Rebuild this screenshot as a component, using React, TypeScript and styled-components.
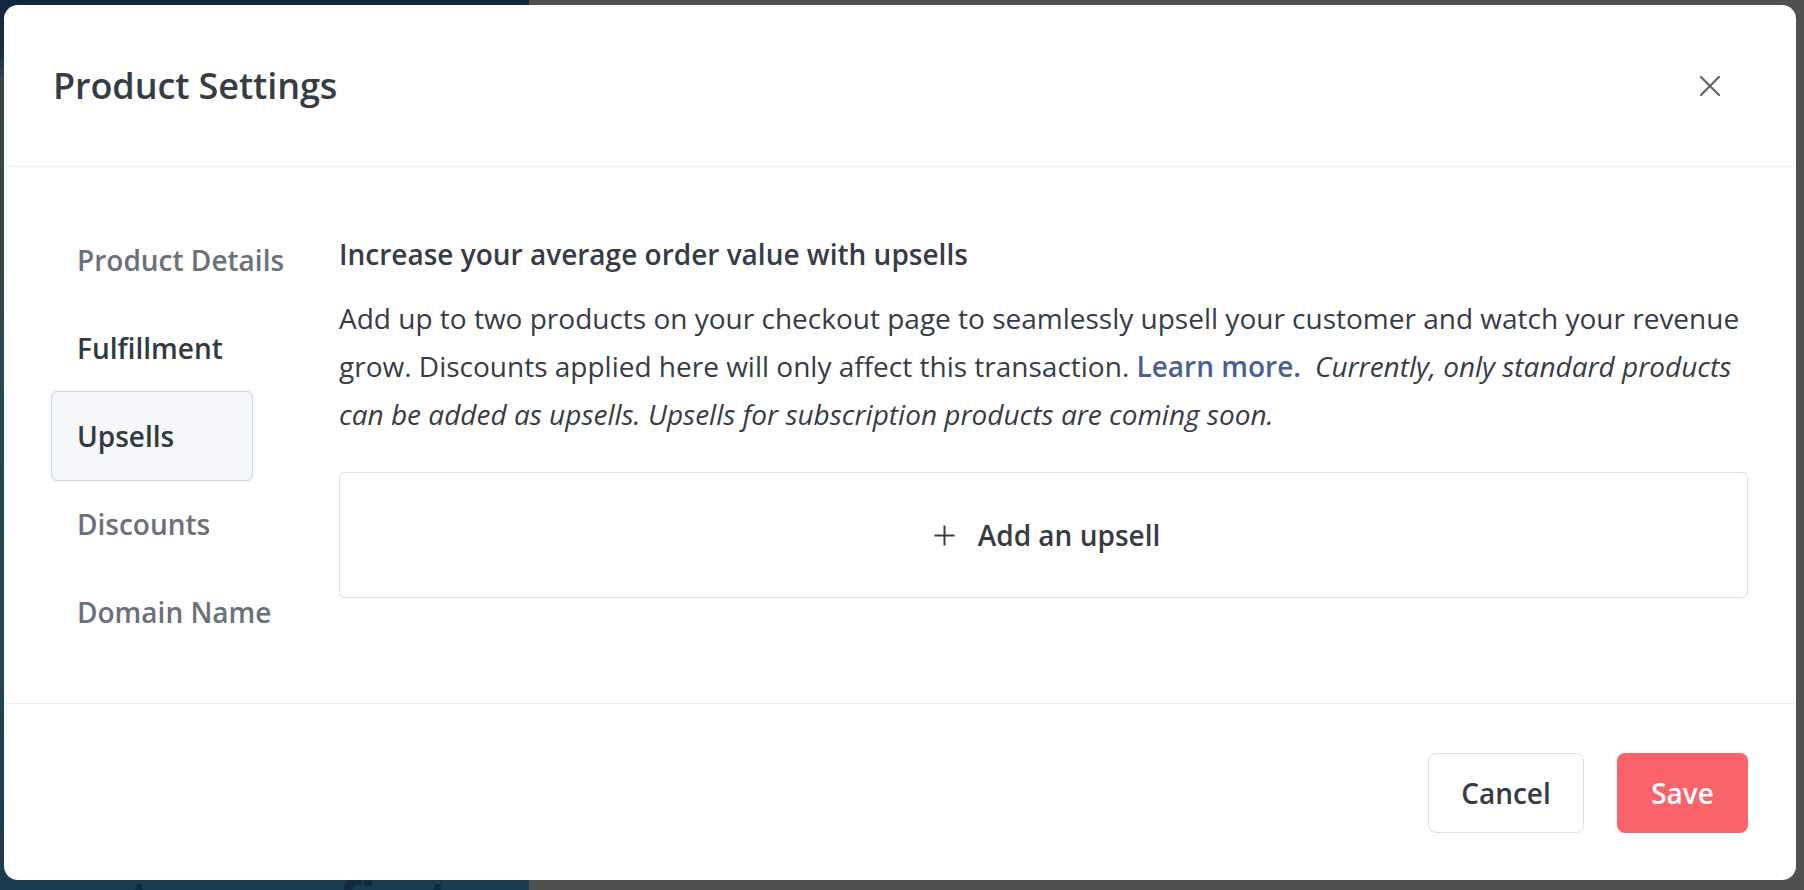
import React from "react";
import styled, { createGlobalStyle } from "styled-components";

const GlobalStyle = createGlobalStyle`
  html, body {
    margin: 0;
    padding: 0;
    height: 100%;
    overflow: hidden;
  }
  body {
    font-family: "Open Sans", "Noto Sans", sans-serif;
    -webkit-font-smoothing: antialiased;
  }
  * { box-sizing: border-box; }
`;

const Backdrop = styled.div`
  position: relative;
  display: flex;
  width: 100vw;
  height: 100vh;
`;

const BackdropLeft = styled.div`
  width: 529px;
  display: flex;
  flex-direction: column;
  justify-content: flex-end;
  overflow: hidden;
  background: linear-gradient(
    to bottom,
    #10263b 0%,
    #14304a 6%,
    #3c4446 9%,
    #3a4548 30%,
    #22494f 45%,
    #1f4552 75%,
    #1a3b4d 100%
  );
`;

const BackdropText = styled.div`
  font-family: "Open Sans", sans-serif;
  font-weight: 700;
  font-size: 54px;
  line-height: 54px;
  color: #0f2a40;
  white-space: nowrap;
  margin: 0 0 -36px -22px;
`;

const BackdropRight = styled.div`
  flex: 1;
  background: #4f504f;
`;

const Modal = styled.div`
  position: absolute;
  left: 4px;
  top: 5px;
  width: 1792px;
  height: 875px;
  background: #ffffff;
  border-radius: 14px;
  display: flex;
  flex-direction: column;
  overflow: hidden;
`;

const Header = styled.header`
  height: 162px;
  flex: none;
  display: flex;
  align-items: center;
  justify-content: space-between;
  padding: 0 66px 0 49px;
  border-bottom: 1px solid #e9eef3;
`;

const Title = styled.h1`
  margin: 0;
  font-size: 36px;
  font-weight: 600;
  color: #363c45;
  letter-spacing: -0.1px;
`;

const CloseButton = styled.button`
  width: 40px;
  height: 40px;
  border: none;
  background: transparent;
  padding: 0;
  display: flex;
  align-items: center;
  justify-content: center;
  cursor: pointer;
`;

const Body = styled.div`
  flex: 1;
  display: flex;
  gap: 86px;
  padding: 49px 48px 0 47px;
`;

const Nav = styled.nav`
  width: 202px;
  flex: none;
  display: flex;
  flex-direction: column;
`;

const NavItem = styled.div<{ $active?: boolean; $strong?: boolean }>`
  display: flex;
  align-items: center;
  padding-left: 25px;
  font-size: 28px;
  font-weight: 600;
  white-space: nowrap;
  color: ${(p) => (p.$active || p.$strong ? "#323940" : "#6b7079")};
  border-radius: 6px;
  border: 1px solid ${(p) => (p.$active ? "#cbd5e3" : "transparent")};
  background: ${(p) => (p.$active ? "#f5f7fa" : "transparent")};
  height: ${(p) => (p.$active ? "90px" : "88px")};
  margin: ${(p) => (p.$active ? "-1px 0" : "0")};
`;

const Content = styled.section`
  flex: 1;
  display: flex;
  flex-direction: column;
`;

const Heading = styled.h2`
  margin: 18px 0 20px;
  font-size: 28px;
  line-height: 40px;
  font-weight: 600;
  color: #363c45;
`;

const Paragraph = styled.p`
  margin: 0 0 34px;
  font-size: 28px;
  line-height: 48px;
  font-weight: 400;
  color: #363c45;
`;

const Link = styled.a`
  color: #4a5f94;
  font-weight: 600;
  text-decoration: none;
  margin-right: 14px;
`;

const Note = styled.em`
  font-style: italic;
`;

const AddBox = styled.button`
  height: 126px;
  width: 100%;
  border: 1.5px solid #dde1e6;
  border-radius: 6px;
  background: #ffffff;
  display: flex;
  align-items: center;
  justify-content: center;
  gap: 23px;
  padding: 0 0 0 7px;
  font-family: inherit;
  font-size: 28px;
  font-weight: 600;
  color: #363c45;
  cursor: pointer;
`;

const Footer = styled.footer`
  height: 177px;
  flex: none;
  border-top: 1px solid #e9eef3;
  display: flex;
  align-items: center;
  justify-content: flex-end;
  gap: 33px;
  padding: 2px 48px 0 0;
`;

const FooterButton = styled.button<{ $primary?: boolean }>`
  height: 80px;
  width: ${(p) => (p.$primary ? "131px" : "156px")};
  border-radius: 8px;
  border: ${(p) => (p.$primary ? "none" : "1.5px solid #dde1e6")};
  background: ${(p) => (p.$primary ? "#fb636b" : "#ffffff")};
  color: ${(p) => (p.$primary ? "#ffffff" : "#363c45")};
  font-family: inherit;
  font-size: 28px;
  font-weight: 600;
  cursor: pointer;
`;

const CloseIcon = () => (
  <svg width="20" height="20" viewBox="0 0 20 20" fill="none">
    <path d="M1 1 L19 19 M19 1 L1 19" stroke="#60656c" strokeWidth="2.2" strokeLinecap="round" />
  </svg>
);

const PlusIcon = () => (
  <svg width="21" height="21" viewBox="0 0 21 21" fill="none">
    <path d="M10.5 0.5 V20.5 M0.5 10.5 H20.5" stroke="#363c45" strokeWidth="2" />
  </svg>
);

const navItems = [
  { label: "Product Details" },
  { label: "Fulfillment", strong: true },
  { label: "Upsells", active: true },
  { label: "Discounts" },
  { label: "Domain Name" },
];

export default function App() {
  return (
    <>
      <GlobalStyle />
      <Backdrop>
        <BackdropLeft>
          <BackdropText>iness to your first</BackdropText>
        </BackdropLeft>
        <BackdropRight />
        <Modal>
          <Header>
            <Title>Product Settings</Title>
            <CloseButton aria-label="Close">
              <CloseIcon />
            </CloseButton>
          </Header>
          <Body>
            <Nav>
              {navItems.map((item) => (
                <NavItem key={item.label} $active={item.active} $strong={item.strong}>
                  {item.label}
                </NavItem>
              ))}
            </Nav>
            <Content>
              <Heading>Increase your average order value with upsells</Heading>
              <Paragraph>
                Add up to two products on your checkout page to seamlessly upsell your customer and
                watch your revenue grow. Discounts applied here will only affect this transaction.{" "}
                <Link href="#">Learn more.</Link>
                <Note>
                  Currently, only standard products can be added as upsells. Upsells for subscription
                  products are coming soon.
                </Note>
              </Paragraph>
              <AddBox>
                <PlusIcon />
                <span>Add an upsell</span>
              </AddBox>
            </Content>
          </Body>
          <Footer>
            <FooterButton>Cancel</FooterButton>
            <FooterButton $primary>Save</FooterButton>
          </Footer>
        </Modal>
      </Backdrop>
    </>
  );
}
